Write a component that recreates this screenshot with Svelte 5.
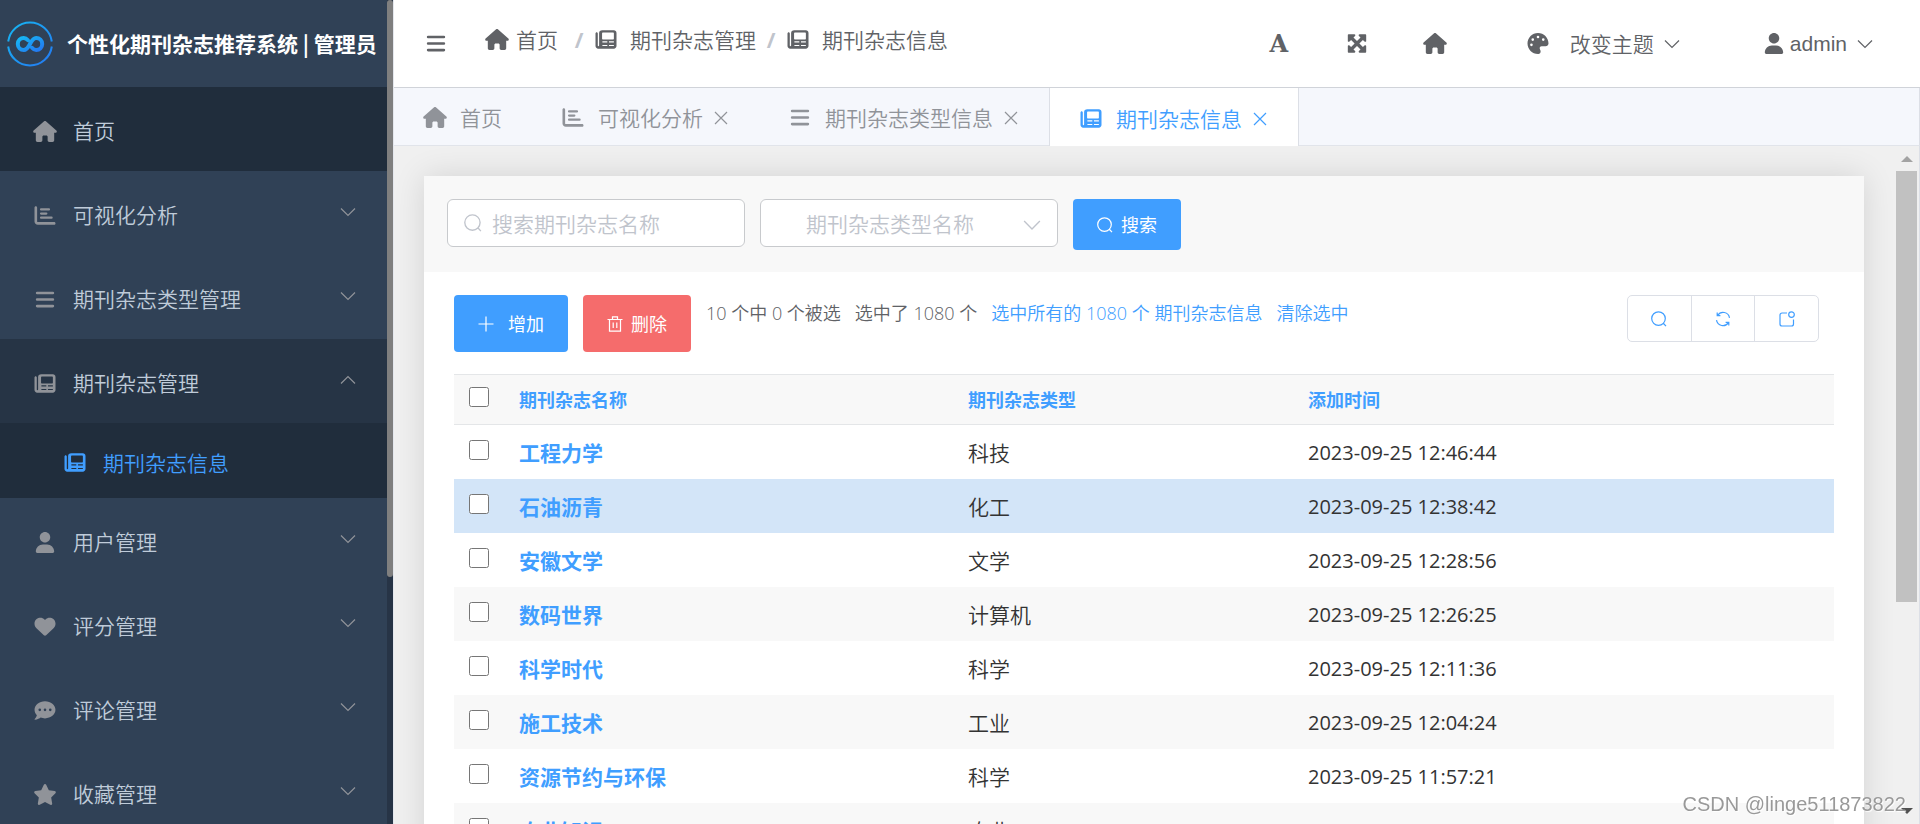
<script lang="ts">
  type Icon = { box: string; d: string; line?: number };

  const house = 'M575.8 255.5C575.8 273.5 560.8 287.6 543.8 287.6H511.8L512.5 447.7C512.5 450.5 512.3 453.1 512 455.8V472C512 494.1 494.1 512 472 512H392C369.9 512 352 494.1 352 472V384C352 366.3 337.7 352 320 352H256C238.3 352 224 366.3 224 384V472C224 494.1 206.1 512 184 512H104C81.9 512 64 494.1 64 472V287.6H32C14 287.6 0 273.5 0 255.5C0 246.5 3 238.5 10 231.5L266.4 8C273.4 1 281.4 0 288.4 0C295.4 0 303.4 2 309.5 7L564.8 231.5C572.8 238.5 576.9 246.5 575.8 255.5z';

  const icons: Record<string, Icon> = {
    home: { box: '0 0 576 512', d: house },
    chart: {
      box: '0 0 512 512',
      d: 'M32 32c18 0 32 14 32 32v336c0 9 7 16 16 16h400c18 0 32 14 32 32s-14 32-32 32H80c-44 0-80-36-80-80V64c0-18 14-32 32-32zM160 80h192a28 28 0 0 1 0 56H160a28 28 0 0 1 0-56zM160 180h128a28 28 0 0 1 0 56H160a28 28 0 0 1 0-56zM160 280h256a28 28 0 0 1 0 56H160a28 28 0 0 1 0-56z',
    },
    bars: {
      box: '0 0 448 512',
      d: 'M32 64h384a32 32 0 0 1 0 64H32a32 32 0 0 1 0-64zM32 224h384a32 32 0 0 1 0 64H32a32 32 0 0 1 0-64zM32 384h384a32 32 0 0 1 0 64H32a32 32 0 0 1 0-64z',
    },
    news: {
      box: '0 0 512 512',
      d: 'M168 32h280c35 0 64 29 64 64v320c0 35-29 64-64 64H64c-35 0-64-29-64-64V112c0-18 14-32 28-32s28 14 28 32v288c0 11 5 18 14 18s18-7 18-18V96c0-35 29-64 80-64zM160 104v136c0 9 7 16 16 16h256c9 0 16-7 16-16V104c0-9-7-16-16-16H176c-9 0-16 7-16 16zM168 300v32h120v-32zM328 300v32h120v-32zM168 388v28h120v-28zM328 388v28h120v-28z',
    },
    user: {
      box: '0 0 448 512',
      d: 'M224 256c70.7 0 128-57.3 128-128S294.7 0 224 0C153.3 0 96 57.3 96 128S153.3 256 224 256zM274.7 304H173.3C77.6 304 0 381.6 0 477.3c0 19.1 15.5 34.7 34.7 34.7h378.7C432.5 512 448 496.5 448 477.3C448 381.6 370.4 304 274.7 304z',
    },
    heart: {
      box: '0 0 512 512',
      d: 'M0 190.9V185.1C0 115.2 50.5 55.6 119.4 44.1C164.1 36.5 211.4 51.4 244 84L256 96L267.1 84C300.6 51.4 347 36.5 392.6 44.1C461.5 55.6 512 115.2 512 185.1V190.9C512 232.4 494.8 272.1 464.4 300.4L283.7 469.1C276.2 476.1 266.3 480 256 480C245.7 480 235.8 476.1 228.3 469.1L47.6 300.4C17.2 272.1 0 232.4 0 190.9z',
    },
    comment: {
      box: '0 0 512 512',
      d: 'M256 32C114.6 32 .9 125.1 .9 240c0 49.6 21.3 95 57 130.7C45.4 421 3.6 465.9 3.1 466.4c-2.3 2.3-2.9 5.7-1.5 8.7c1.2 3 4 4.9 7.3 4.9c66.3 0 115.1-31.8 140.6-51.4C182.1 440.9 217.6 448 256 448c141.4 0 255.1-93.1 255.1-208S397.4 32 256 32zM128 208a32 32 0 1 0 0 64a32 32 0 1 0 0-64zM256 208a32 32 0 1 0 0 64a32 32 0 1 0 0-64zM384 208a32 32 0 1 0 0 64a32 32 0 1 0 0-64z',
    },
    star: {
      box: '0 0 576 512',
      d: 'M381.2 150.3L524.9 171.5C536.8 173.2 546.8 181.6 550.6 193.1C554.4 204.7 551.3 217.3 542.7 225.9L438.5 328.1L463.1 474.7C465.1 486.7 460.2 498.9 450.2 506C440.3 513.1 427.2 514 416.5 508.3L288.1 439.8L159.8 508.3C149 514 135.9 513.1 126 506C116.1 498.9 111.1 486.7 113.2 474.7L137.8 328.1L33.6 225.9C25 217.3 21.9 204.7 25.7 193.1C29.5 181.6 39.4 173.2 51.4 171.5L195 150.3L259.4 18C264.7 7 275.8 0 288.1 0C300.4 0 311.4 7 316.8 18L381.2 150.3z',
    },
    expand: {
      box: '0 0 448 512',
      d: 'M24 32h136c22 0 32 26 17 41l-39 39 86 86 86-86-39-39c-15-15-5-41 17-41h136c13 0 24 11 24 24v136c0 22-26 32-41 17l-39-39-86 86 86 86 39-39c15-15 41-5 41 17v136c0 13-11 24-24 24H288c-22 0-32-26-17-41l39-39-86-86-86 86 39 39c15 15 5 41-17 41H24c-13 0-24-11-24-24V320c0-22 26-32 41-17l39 39 86-86-86-86-39 39c-15 15-41 5-41-17V56c0-13 11-24 24-24z',
    },
    palette: {
      box: '0 0 512 512',
      d: 'M512 256C512 295 478 320 442 320H344C317.5 320 296 341.5 296 368C296 378 303 397 308 408C314 421.6 320 435.3 320 449.8C320 481.7 298.4 510.5 266.6 511.8C263 512 259.5 512 256 512C114.6 512 0 397.4 0 256C0 114.6 114.6 0 256 0C397.4 0 512 114.6 512 256zM96 256a32 32 0 1 0 0 64a32 32 0 1 0 0-64zM128 128a32 32 0 1 0 0 64a32 32 0 1 0 0-64zM256 64a32 32 0 1 0 0 64a32 32 0 1 0 0-64zM384 128a32 32 0 1 0 0 64a32 32 0 1 0 0-64z',
    },
    down: { box: '0 0 16 16', d: 'M1 4.5L8 11.5l7-7', line: 1 },
    up: { box: '0 0 16 16', d: 'M1 11.5L8 4.5l7 7', line: 1 },
    close: { box: '0 0 16 16', d: 'M2 2l12 12M14 2L2 14', line: 1 },
    plus: { box: '0 0 16 16', d: 'M8 .5v15M.5 8h15', line: 1 },
    search: { box: '0 0 16 16', d: 'M7.5 .8a6.8 6.8 0 1 0 0 13.6a6.8 6.8 0 1 0 0-13.6M12.5 12.5l2.5 2.7', line: 1 },
    trash: { box: '0 0 16 16', d: 'M.5 3.5h15M2.5 3.5v11.7h11V3.5M5.5 3.3V.8h5v2.5M6.2 6.5v5.5M9.8 6.5v5.5', line: 1 },
    refresh: { box: '0 0 16 16', d: 'M1.5 9.2A6.5 6.5 0 0 0 13.4 11.6M14.5 6.8A6.5 6.5 0 0 0 2.6 4.4M2.2 1.5v3.2h3.2M13.8 14.5v-3.2h-3.2', line: 1 },
    setup: { box: '0 0 16 16', d: 'M8 2H3a2 2 0 0 0-2 2v9a2 2 0 0 0 2 2h9.5a2 2 0 0 0 2-2V8.5M12.5 .8a2.8 2.8 0 1 0 0 5.6a2.8 2.8 0 1 0 0-5.6', line: 1 },
  };

  const menu = [
    { icon: 'home', label: '首页', leaf: true },
    { icon: 'chart', label: '可视化分析' },
    { icon: 'bars', label: '期刊杂志类型管理' },
    { icon: 'news', label: '期刊杂志管理', children: [{ icon: 'news', label: '期刊杂志信息' }] },
    { icon: 'user', label: '用户管理' },
    { icon: 'heart', label: '评分管理' },
    { icon: 'comment', label: '评论管理' },
    { icon: 'star', label: '收藏管理' },
  ];

  const crumbs = [
    { icon: 'home', label: '首页' },
    { icon: 'news', label: '期刊杂志管理' },
    { icon: 'news', label: '期刊杂志信息' },
  ];

  const tabs = [
    { icon: 'home', label: '首页', fixed: true },
    { icon: 'chart', label: '可视化分析' },
    { icon: 'bars', label: '期刊杂志类型信息' },
    { icon: 'news', label: '期刊杂志信息' },
  ];
  let activeTab = $state(3);

  const rows = [
    { name: '工程力学', type: '科技', time: '2023-09-25 12:46:44' },
    { name: '石油沥青', type: '化工', time: '2023-09-25 12:38:42' },
    { name: '安徽文学', type: '文学', time: '2023-09-25 12:28:56' },
    { name: '数码世界', type: '计算机', time: '2023-09-25 12:26:25' },
    { name: '科学时代', type: '科学', time: '2023-09-25 12:11:36' },
    { name: '施工技术', type: '工业', time: '2023-09-25 12:04:24' },
    { name: '资源节约与环保', type: '科学', time: '2023-09-25 11:57:21' },
    { name: '农业知识', type: '农业', time: '2023-09-25 11:50:08' },
  ];
  let current = $state(1);
  let openMenu = $state('期刊杂志管理');
  let keyword = $state('');
</script>

{#snippet icon(name: string)}
  {@const i = icons[name]}
  <svg class="icon" class:line={i.line} viewBox={i.box} aria-hidden="true"><path d={i.d} /></svg>
{/snippet}

<div class="shell">
  <aside>
    <div class="side">
      <div class="brand">
        <svg class="logo" viewBox="0 0 46 46" aria-hidden="true">
          <defs>
            <linearGradient id="blue" x1="0" y1="0" x2="1" y2="1">
              <stop offset="0" stop-color="#16b8f3" />
              <stop offset="1" stop-color="#2478f2" />
            </linearGradient>
          </defs>
          <g fill="none" stroke="url(#blue)">
            <path stroke-width="2" d="M1.200 20.500A22 22 0 0 1 44.800 20.500M1.200 25.500A22 22 0 0 0 44.800 25.500" />
            <path stroke-width="4" stroke-linecap="round" d="M21 19.200C19.500 17.500 18 17 16.800 17A6 6 0 0 0 16.800 29C23 29 23 17 29.200 17A6 6 0 0 1 29.200 29C28 29 26.500 28.500 25 26.800" />
          </g>
        </svg>
        <strong>个性化期刊杂志推荐系统 | 管理员</strong>
      </div>
      <nav>
        {#each menu as m (m.label)}
          <button
            class="item"
            class:leaf={m.leaf}
            class:open={m.children && openMenu === m.label}
            onclick={() => (openMenu = openMenu === m.label ? '' : m.label)}
          >
            {@render icon(m.icon)}
            <span>{m.label}</span>
            {#if !m.leaf}
              <i class="arrow">{@render icon(openMenu === m.label ? 'up' : 'down')}</i>
            {/if}
          </button>
          {#if m.children && openMenu === m.label}
            {#each m.children as c (c.label)}
              <a class="item sub" href="#info">{@render icon(c.icon)}<span>{c.label}</span></a>
            {/each}
          {/if}
        {/each}
      </nav>
    </div>
    <div class="side-bar"><div class="side-thumb"></div></div>
  </aside>

  <div class="main">
    <header>
      <button class="plain" aria-label="折叠菜单">{@render icon('bars')}</button>
      <nav class="crumbs" aria-label="面包屑">
        {#each crumbs as c, n (c.label)}
          {#if n}<span class="sep">/</span>{/if}
          <a href="#crumb" class:first={n === 0}>{@render icon(c.icon)}{c.label}</a>
        {/each}
      </nav>
      <div class="tools">
        <button class="plain letter" aria-label="字体大小">A</button>
        <button class="plain" aria-label="全屏">{@render icon('expand')}</button>
        <button class="plain" aria-label="主页">{@render icon('home')}</button>
      </div>
      <button class="plain theme">{@render icon('palette')}<span>改变主题</span>{@render icon('down')}</button>
      <button class="plain account">{@render icon('user')}<span>admin</span>{@render icon('down')}</button>
    </header>

    <div class="tabs">
      {#each tabs as t, n (t.label)}
        <div class="tab" class:active={n === activeTab}>
          <button class="plain" onclick={() => (activeTab = n)}>{@render icon(t.icon)}<span>{t.label}</span></button>
          {#if !t.fixed}
            <button class="plain" aria-label="关闭">{@render icon('close')}</button>
          {/if}
        </div>
      {/each}
    </div>

    <div class="content">
      <main class="card">
        <form class="filter" onsubmit={(e) => e.preventDefault()}>
          <label class="field">
            {@render icon('search')}
            <input type="text" aria-label="搜索期刊杂志名称" placeholder="搜索期刊杂志名称" bind:value={keyword} />
          </label>
          <label class="field">
            <select aria-label="期刊杂志类型名称">
              <option>期刊杂志类型名称</option>
              <option>科技</option>
              <option>化工</option>
              <option>文学</option>
            </select>
            {@render icon('down')}
          </label>
          <button class="btn find">{@render icon('search')}<span>搜索</span></button>
        </form>

        <div class="body">
          <div class="toolbar">
            <button class="btn add">{@render icon('plus')}<span>增加</span></button>
            <button class="btn danger">{@render icon('trash')}<span>删除</span></button>
            <p class="info">
              <span>10 个中 0 个被选</span>
              <span>选中了 1080 个</span>
              <a href="#all">选中所有的 1080 个 期刊杂志信息</a>
              <a href="#clear">清除选中</a>
            </p>
            <div class="group">
              <button aria-label="搜索">{@render icon('search')}</button>
              <button aria-label="刷新">{@render icon('refresh')}</button>
              <button aria-label="设置">{@render icon('setup')}</button>
            </div>
          </div>

          <table>
            <colgroup><col class="c-check" /><col class="c-name" /><col class="c-type" /><col /></colgroup>
            <thead>
              <tr>
                <th><input type="checkbox" aria-label="全选" /></th>
                <th>期刊杂志名称</th>
                <th>期刊杂志类型</th>
                <th>添加时间</th>
              </tr>
            </thead>
            <tbody>
              {#each rows as r, n (r.name)}
                <tr class:current={n === current} onmouseenter={() => (current = n)}>
                  <td><input type="checkbox" aria-label={r.name} /></td>
                  <td><a href="#detail">{r.name}</a></td>
                  <td>{r.type}</td>
                  <td class="time">{r.time}</td>
                </tr>
              {/each}
            </tbody>
          </table>
        </div>
      </main>
      <div class="scroll">
        <span class="tri up"></span>
        <div class="thumb"></div>
        <span class="tri dn"></span>
      </div>
    </div>
  </div>
</div>
<div class="mark">CSDN @linge511873822</div>

<style>
  :global(body) { background: #f0f0f0; }
  .shell {
    display: flex; height: 100vh; overflow: hidden;
    font-family: 'Open Sans', 'Noto Sans CJK SC', sans-serif;
    font-size: 21px; font-weight: 350; line-height: 30px; color: #606266;
  }
  .shell :is(button, input, select) { font: inherit; }
  .shell * { box-sizing: border-box; }
  a { text-decoration: none; color: inherit; }
  i { display: flex; }
  .icon { width: 24px; height: 21px; flex-shrink: 0; fill: currentColor; fill-rule: evenodd; }
  .icon.line { width: 16px; height: 16px; fill: none; stroke: currentColor; stroke-width: 1.2; }
  .plain {
    display: flex; align-items: center; padding: 0; border: 0;
    background: none; color: inherit; cursor: pointer;
  }

  /* sidebar */
  aside { display: flex; width: 393px; flex-shrink: 0; background: #304156; }
  .side { flex: 1; overflow: hidden; }
  .side-bar { width: 6px; background: #273446; }
  .side-thumb { height: 70%; border-radius: 3px; background: #7f7f7f; }
  .brand { display: flex; align-items: center; gap: 14px; height: 87px; padding-left: 7px; color: #fff; white-space: nowrap; }
  .brand strong { padding-bottom: 2px; font-family: 'Noto Sans CJK SC', sans-serif; font-weight: 700; }
  .logo { width: 46px; height: 46px; flex-shrink: 0; }
  .item {
    display: flex; align-items: center; gap: 16px; width: 100%; height: 84px;
    padding: 4px 31px 0 33px; border: 0; background: none;
    color: #bfcbd9; text-align: left; cursor: pointer;
  }
  .item > :global(.icon) { color: #909399; }
  .item span { flex: 1; }
  .item.leaf { background: #202d3c; }
  .item.open { background: #263445; }
  .item.sub { height: 75px; padding-left: 63px; background: #202d3c; color: #409eff; }
  .item.sub > :global(.icon) { color: #409eff; }
  .arrow { color: #909399; padding-bottom: 6px; }

  /* header */
  .main { flex: 1; min-width: 0; display: flex; flex-direction: column; border-left: 1px solid #e4e7ed; }
  header {
    display: flex; align-items: center; height: 88px; flex-shrink: 0;
    padding: 0 47px 0 30px; background: #fff; border-bottom: 1px solid #d0d3d9;
  }
  .crumbs { display: flex; align-items: center; margin-left: 37px; padding-bottom: 8px; white-space: nowrap; }
  .crumbs a { display: flex; align-items: center; gap: 12px; }
  .crumbs .first { gap: 7px; padding-right: 6px; }
  .sep { width: 30px; text-align: center; font-weight: 700; color: #c0c4cc; }
  .tools { display: flex; gap: 54px; margin-left: auto; }
  .plain.letter { width: 24px; justify-content: center; font-family: 'DejaVu Serif', serif; font-size: 24px; font-weight: 700; }
  .theme { margin-left: 79px; }
  .theme span { margin: 0 10px 0 20px; }
  .plain.account { margin-left: 82px; font-family: 'Liberation Sans', sans-serif; font-weight: 400; }
  .account span { margin: 0 10px 0 4px; }

  /* tabs */
  .tabs { display: flex; height: 58px; flex-shrink: 0; background: #f5f7fc; border-bottom: 1px solid #e1e4ea; border-right: 1px solid #dcdfe6; }
  .tab { display: flex; align-items: center; gap: 10px; padding: 2px 30px 0 29px; color: #909399; white-space: nowrap; }
  .tab .plain { gap: 13px; }
  .tab.active { height: 59px; background: #fff; color: #409eff; border: solid #dcdfe6; border-width: 0 1px; }

  /* content */
  .content { flex: 1; min-height: 0; display: flex; overflow: hidden; background: #f0f0f0; border-right: 1px solid #dcdfe6; }
  .card { flex: 1; margin: 30px 32px 0 30px; height: max-content; background: #fff; box-shadow: 0 0 30px rgba(0, 0, 0, 0.12); }
  .filter { display: flex; gap: 15px; height: 96px; padding: 23px; background: #f8f8f8; }
  .field {
    display: flex; align-items: center; width: 298px; height: 48px;
    border: 1px solid #c8cacd; border-radius: 6px; background: #fff; color: #c0c4cc;
  }
  .field input, .field select { flex: 1; min-width: 0; height: 46px; border: 0; background: none; outline: none; }
  .field input { padding: 2px 10px 0; }
  .field input::placeholder { color: #c0c4cc; opacity: 1; }
  .field select { appearance: none; padding: 2px 0 0 45px; color: #c0c4cc; }
  .field :global(.icon) { width: 18px; height: 18px; margin-left: 16px; }
  .field select + :global(.icon) { margin: 4px 16px 0 0; }
  .btn {
    display: flex; align-items: center; justify-content: center; gap: 8px; height: 57px; width: 108px;
    border: 0; border-radius: 4px; background: #409eff; color: #fff; cursor: pointer;
  }
  .shell .btn { font-size: 18px; font-weight: 400; }
  .find { height: 51px; }
  .add { width: 114px; gap: 14px; }
  .danger { background: #f56c6c; }
  .body { padding: 23px 30px 0; }
  .toolbar { display: flex; gap: 15px; height: 79px; }
  .info { display: flex; gap: 14px; margin: 0; padding-top: 3px; font-size: 18px; white-space: nowrap; }
  .info a { color: #409eff; }
  .group { display: flex; width: 192px; height: 47px; margin: 0 15px 0 auto; border: 1px solid #dcdfe6; border-radius: 5px; }
  .group button { flex: 1; display: flex; align-items: center; justify-content: center; padding: 0; border: 0; background: none; color: #409eff; }
  .group button + button { border-left: 1px solid #dcdfe6; }

  table { width: 100%; border-collapse: collapse; table-layout: fixed; color: #333; }
  .c-check { width: 50px; }
  .c-name { width: 449px; }
  .c-type { width: 340px; }
  th { height: 50px; padding: 0 15px; text-align: left; font-size: 18px; font-weight: 700; color: #409eff; background: #f8f8f8; border: solid #e4e6e8; border-width: 1px 0; }
  td { height: 54px; padding: 3px 15px 0; }
  td a { color: #409eff; font-weight: 700; }
  .time { font-size: 20px; font-weight: 400; }
  tbody tr:nth-child(even) { background: #f8f8f8; }
  tbody tr.current { background: #d3e5f8; }
  table input { display: block; width: 20px; height: 20px; margin: 0 0 6px; }

  /* page scrollbar */
  .scroll { display: flex; flex-direction: column; align-items: center; width: 23px; padding: 10px 2px 10px 0; }
  .thumb { width: 21px; height: 431px; margin-top: 9px; background: #c1c1c1; }
  .tri { border: solid transparent; border-width: 0 6px; }
  .up { border-bottom: 6px solid #a3a3a3; }
  .dn { margin-top: auto; border-top: 6px solid #505050; }
  .mark {
    position: fixed; right: 14px; bottom: 8px; pointer-events: none;
    font: 20px/24px 'Liberation Sans', sans-serif; color: #999; text-shadow: 1px 1px 1px #fff;
  }
</style>
